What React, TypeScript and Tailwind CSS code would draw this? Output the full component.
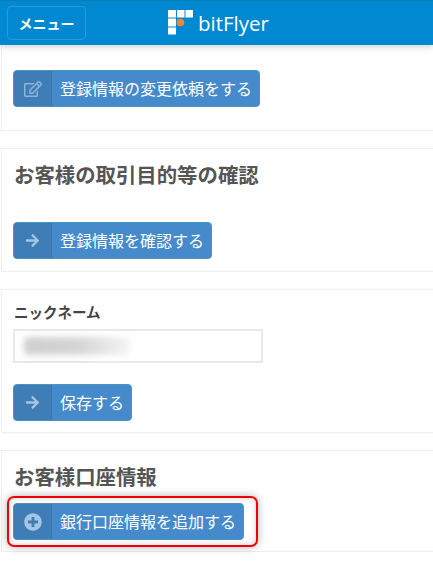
import { FaArrowRight, FaPlusCircle, FaRegEdit } from "react-icons/fa";
import type { ReactNode } from "react";

const jp = "font-['Noto_Sans_CJK_JP','Noto_Sans',sans-serif]";

function Btn({ icon, label }: { icon: ReactNode; label: string }) {
  return (
    <button className="flex h-[37px] items-stretch rounded-[4px] border border-[#4a94bf] bg-[#458aca] text-white">
      <span className="flex w-[38px] items-center justify-center rounded-l-[3px] border-r border-[#3a77a8] bg-[#3f7db6]">{icon}</span>
      <span className="flex items-center pb-[1px] pl-[8px] pr-[7px] text-[16px] leading-none">{label}</span>
    </button>
  );
}

function Arrow() {
  return <FaArrowRight size={15} className="text-[#a5c5e2]" />;
}

function Panel({ className, children }: { className: string; children: ReactNode }) {
  return <section className={`-mr-2 ml-px border border-[#eeeeee] bg-white ${className}`}>{children}</section>;
}

export default function App() {
  return (
    <div className={`h-[586px] w-[433px] overflow-hidden bg-white ${jp}`}>
      <header className="relative z-10 flex h-[45px] items-center border-t border-[#0a7cba] bg-[#0088d1] pl-[7px] shadow-[0_2px_6px_rgba(0,0,0,0.18)]">
        <button className="flex h-[34px] w-[79px] items-center justify-center rounded-[4px] border border-[#2a9ad8] text-[14px] font-bold text-white">メニュー</button>
        <div className="ml-[82px] flex items-center">
          <svg width="26" height="26" viewBox="0 0 26 26" className="mr-[4px]">
            <g fill="#ffffff">
              <rect x="0" y="0" width="8" height="7.5" />
              <rect x="9" y="0" width="7.5" height="7.5" />
              <rect x="17.5" y="0" width="7.5" height="7.5" />
              <rect x="0" y="8.5" width="8" height="8" />
              <rect x="0" y="17.5" width="8" height="7" />
            </g>
            <circle cx="12.5" cy="12.5" r="3.8" fill="#f58634" />
          </svg>
          <span className="font-['Open_Sans',sans-serif] text-[20.5px] leading-none text-white">bitFlyer</span>
        </div>
      </header>

      <Panel className="h-[86px] border-t-0 pl-[11px] pt-[25px]">
        <Btn icon={<FaRegEdit size={18} className="text-[#8fb4d6]" />} label="登録情報の変更依頼をする" />
      </Panel>

      <Panel className="mt-[17px] h-[124px] pl-[11px] pt-[10px]">
        <h2 className="h-[54px] pl-[1px] text-[20.4px] font-bold leading-[30px] text-[#555555]">お客様の取引目的等の確認</h2>
        <div className="pt-[9px]">
          <Btn icon={<Arrow />} label="登録情報を確認する" />
        </div>
      </Panel>

      <Panel className="mt-[17px] h-[144px] pl-[11px] pt-[10px]">
        <label className="block pl-[1px] text-[14.5px] font-bold leading-[24px] text-[#444444]">ニックネーム</label>
        <div className="mt-[5px] flex h-[34px] w-[250px] items-center border-2 border-[#e8e8e8] bg-white pl-[9px]">
          <div className="h-[18px] w-[106px] rounded-sm bg-gradient-to-r from-[#d0d0d0] via-[#d4d4d4] to-[#f5f5f5] blur-[3px]" />
        </div>
        <div className="pt-[21px]">
          <Btn icon={<Arrow />} label="保存する" />
        </div>
      </Panel>

      <Panel className="mt-[17px] h-[102px] pl-[11px] pt-[10px]">
        <h2 className="h-[42px] pl-[1px] text-[20.4px] font-bold leading-[30px] text-[#555555]">お客様口座情報</h2>
        <div className="relative w-fit">
          <Btn icon={<FaPlusCircle size={18} className="text-[#a5c5e2]" />} label="銀行口座情報を追加する" />
          <div className="absolute -bottom-[7px] -left-[6px] -right-[14px] -top-[7px] rounded-[7px] border-2 border-[#f00000] shadow-[0_0_8px_rgba(0,0,0,0.3),inset_0_0_6px_rgba(0,0,0,0.18)]" />
        </div>
      </Panel>
    </div>
  );
}
